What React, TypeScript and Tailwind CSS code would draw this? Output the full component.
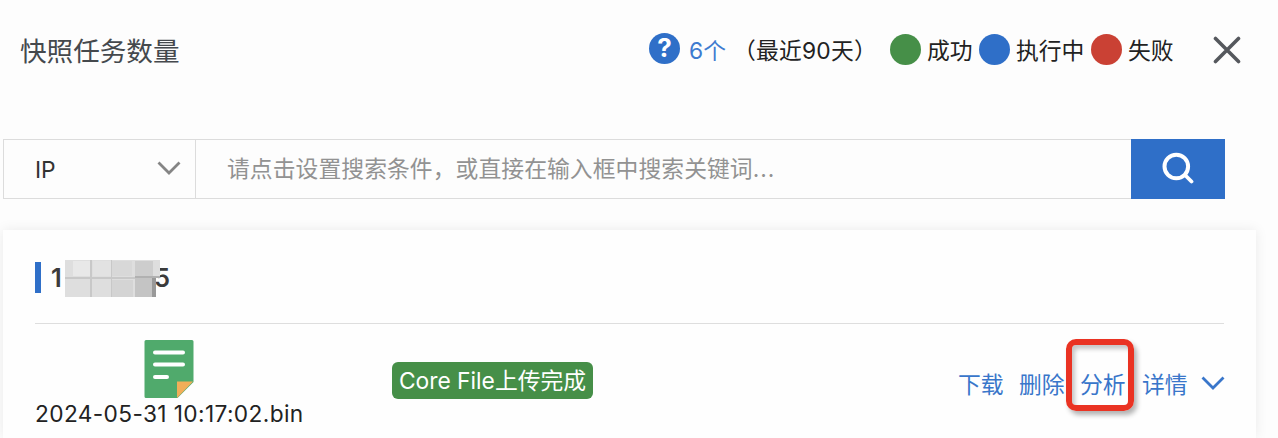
import React from "react";

const legend = [
  { label: "成功", dot: "bg-[#468f48]", width: "w-[89px]" },
  { label: "执行中", dot: "bg-[#2f6fc8]", width: "w-[112px]" },
  { label: "失败", dot: "bg-[#ca4134]", width: "w-[84px]" },
];

function Chevron({ className }: { className: string }) {
  return (
    <svg viewBox="0 0 24 14" className={className} fill="none" stroke="currentColor" strokeWidth="2.8">
      <path d="M1.5 1.5 12 12 22.5 1.5" />
    </svg>
  );
}

function Header() {
  return (
    <header className="flex h-[100px] items-center pl-5">
      <h1 className="w-[629px] pt-px text-[26.6px] leading-[40px] text-[#45494d]">快照任务数量</h1>
      <div className="-mt-1 flex size-[31px] items-center justify-center rounded-full bg-[#2f6fc8] pb-px text-[26px] leading-none font-bold text-white">
        ?
      </div>
      <span className="ml-[9px] w-[44px] pt-[2px] text-[#3e7bd0]">6个</span>
      <span className="w-[157px] pt-[2px] tracking-[0.2px]">（最近90天）</span>
      {legend.map((item) => (
        <div key={item.label} className={`flex shrink-0 items-center gap-[6px] ${item.width}`}>
          <i className={`-mt-[2px] size-[31px] shrink-0 rounded-full ${item.dot}`} />
          <span className="pt-[2px]">{item.label}</span>
        </div>
      ))}
      <svg viewBox="0 0 28 28" className="ml-[38px] size-7 shrink-0" fill="none" stroke="#55585d" strokeWidth="3.6" strokeLinecap="round">
        <path d="M2.5 2.5 25.5 25.5M25.5 2.5 2.5 25.5" />
      </svg>
    </header>
  );
}

function SearchBar() {
  return (
    <div className="mt-[39px] ml-[3px] flex h-[60px] w-[1222px]">
      <button className="flex w-[193px] items-center justify-between border border-[#dcdcdc] pr-[14px] pl-[31px] text-[#333]">
        <span className="pt-[2px]">IP</span>
        <Chevron className="-mt-[3px] h-[14px] w-6 text-[#858585]" />
      </button>
      <div className="flex flex-1 items-center border-y border-[#dcdcdc] pl-[31px] text-[#929292]">
        <span className="tracking-[0.06px]">请点击设置搜索条件，或直接在输入框中搜索关键词</span>
        <span className="tracking-[0.9px]">...</span>
      </div>
      <button className="flex w-[94px] items-center justify-center bg-[#2f6fc8]">
        <svg viewBox="0 0 32 32" className="-mt-[3px] size-8" fill="none" stroke="white" strokeWidth="4" strokeLinecap="round">
          <circle cx="14.3" cy="14.5" r="11.8" />
          <path d="m23 23 6.5 6.5" strokeWidth="3.8" />
        </svg>
      </button>
    </div>
  );
}

function MaskedAddress() {
  return (
    <div className="flex h-[38px] items-center text-[25.5px] font-semibold text-[#3b3b3b]">
      <i className="mr-[10px] h-[31px] w-[6px] bg-[#2f6fc8]" />
      <span className="w-[14px] pt-px">1</span>
      <svg viewBox="0 0 95 37" className="relative z-10 mt-[2px] h-[37px] w-[95px]" shapeRendering="crispEdges">
        <path fill="#dedede" d="M0 0h95v18H91v19H0z" />
        <path fill="#e8e8e8" d="M8 1h17v15H8z" />
        <path fill="#e2e2e2" d="M28 1h18v15H28z" />
        <path fill="#d8d8d8" d="M47 1h20v15H47z" />
        <path fill="#cdcdcd" d="M70 1h18v15H70z" />
        <path fill="#d4d4d4" d="M47 20h21v17H47z" />
        <path fill="#c4c4c4" d="M70 18h17v19H70z" />
        <path fill="#999" d="M87 18h4v19h-4z" />
        <path fill="#c8c8c8" d="M0 17h70v2H0zM25 0h2v37h-2zM46 0h1v37h-1z" />
        <path fill="#b1b1b1" d="M70 16h25v2H70z" />
      </svg>
      <span className="-ml-[6px] pt-px">5</span>
    </div>
  );
}

function FileIcon() {
  return (
    <svg viewBox="0 0 50 60" className="ml-[109px] h-[60px] w-[50px]">
      <path fill="#50aa6c" d="M2 1h46a1.5 1.5 0 0 1 1.5 1.5V43L33.5 59H2a1.5 1.5 0 0 1-1.5-1.5v-55A1.5 1.5 0 0 1 2 1Z" />
      <path fill="#f2ae59" d="M33 42.5h16L33 59z" />
      <path stroke="white" strokeWidth="4" strokeLinecap="round" d="M11 13.5h28M11 25.5h28M11 38h12" />
    </svg>
  );
}

function TaskCard() {
  return (
    <section className="mt-[31px] ml-[3px] h-[208px] w-[1253px] bg-[#fefefe] px-8 pt-7 shadow-[0_0_12px_rgba(0,0,0,0.08)]">
      <MaskedAddress />
      <div className="mt-[27px] flex h-[115px] w-[1189px] border-t border-[#dedede]">
        <div className="w-[357px] pt-[15px]">
          <FileIcon />
          <p className="-mt-px text-[22.7px] leading-[32px] tracking-[0.37px] whitespace-nowrap">2024-05-31 10:17:02.bin</p>
        </div>
        <div className="mt-[38px] flex h-[37px] w-[201px] shrink-0 items-center justify-center rounded-[6px] bg-[#468f48] whitespace-nowrap text-white">
          Core File上传完成
        </div>
        <nav className="-mr-px mt-[43px] ml-auto flex h-9 items-center text-[#3976ca]">
          <a className="w-[61px]">下载</a>
          <a className="w-[61px]">删除</a>
          <a className="relative w-[62px]">
            分析
            <span className="absolute -top-[29px] -left-[14px] h-[72px] w-[68px] rounded-[10px] border-[6px] border-[#ea3323] shadow-[3px_4px_5px_rgba(0,0,0,0.3),inset_3px_4px_4px_rgba(0,0,0,0.22)]" />
          </a>
          <a className="w-[59px]">详情</a>
          <Chevron className="-mt-1 h-[14px] w-6" />
        </nav>
      </div>
    </section>
  );
}

export default function App() {
  return (
    <main className="h-[438px] w-[1278px] overflow-hidden bg-[#fdfdfd] font-['Inter','Noto_Sans_CJK_SC',sans-serif] text-[22.8px] leading-[34px] whitespace-nowrap text-[#222]">
      <Header />
      <SearchBar />
      <TaskCard />
    </main>
  );
}
